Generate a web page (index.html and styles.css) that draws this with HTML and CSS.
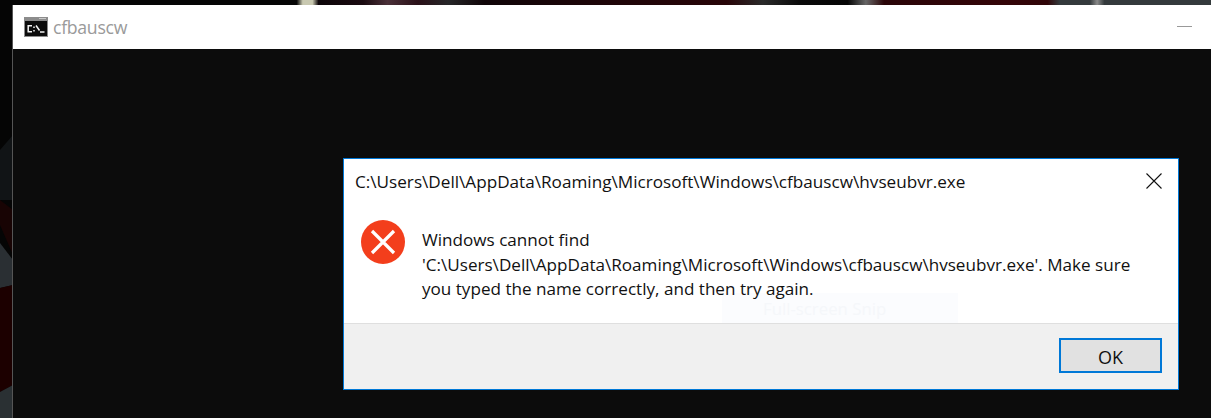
FILE: index.html
```html
<!DOCTYPE html>
<html lang="en">
<head>
<meta charset="utf-8">
<title>cfbauscw</title>
<link rel="stylesheet" href="styles.css">
</head>
<body>
<div class="desktop">
  <svg class="wallpaper" width="1211" height="418" viewBox="0 0 1211 418" aria-hidden="true">
    <defs>
      <linearGradient id="strip" x1="0" x2="1" y1="0" y2="0">
        <stop offset="0" stop-color="#050505"/>
        <stop offset=".245" stop-color="#050505"/>
        <stop offset=".25" stop-color="#c8c8b0"/>
        <stop offset=".258" stop-color="#c8c8b0"/>
        <stop offset=".263" stop-color="#0c0508"/>
        <stop offset=".30" stop-color="#1a0a10"/>
        <stop offset=".32" stop-color="#4a3038"/>
        <stop offset=".345" stop-color="#2a1018"/>
        <stop offset=".37" stop-color="#262628"/>
        <stop offset=".40" stop-color="#100508"/>
        <stop offset=".50" stop-color="#1e0508"/>
        <stop offset=".60" stop-color="#280508"/>
        <stop offset=".63" stop-color="#2a2a2a"/>
        <stop offset=".66" stop-color="#0a0a0a"/>
        <stop offset=".70" stop-color="#050505"/>
        <stop offset=".715" stop-color="#666"/>
        <stop offset=".73" stop-color="#2a0508"/>
        <stop offset=".83" stop-color="#340508"/>
        <stop offset=".865" stop-color="#300508"/>
        <stop offset=".875" stop-color="#343a3c"/>
        <stop offset=".90" stop-color="#343a3c"/>
        <stop offset=".906" stop-color="#8a8a8a"/>
        <stop offset=".912" stop-color="#343a3c"/>
        <stop offset="1" stop-color="#343a3c"/>
      </linearGradient>
    </defs>
    <rect width="1211" height="5" fill="url(#strip)"/>
    <polygon points="0,150 13,135 13,200 0,200" fill="#111416"/>
    <polygon points="0,200 13,210 13,255 0,225" fill="#180404"/>
    <polygon points="0,243 13,260 13,285 0,288" fill="#2a2f33"/>
    <polygon points="0,288 13,285 13,385 0,392" fill="#1c0000"/>
    <polygon points="0,392 13,385 13,418 0,418" fill="#2a3033"/>
  </svg>
  <main class="console">
    <header class="titlebar">
      <svg class="cmd-icon" width="24" height="20" viewBox="0 0 24 20" aria-hidden="true">
        <rect width="24" height="20" fill="#8c8c8c"/>
        <rect x="15" y="1" width="7" height="1" fill="#c8c8c8"/>
        <rect x="1" y="4" width="22" height="15" fill="#0c0c0c"/>
        <path d="M8 8.8H4.2v5.9H8M10 9.5v1.4M10 13v1.4M12 8.5l3.5 5M16 15h4.5" stroke="#f4f4f4" stroke-width="1.5" fill="none"/>
      </svg>
      <span class="app-name">cfbauscw</span>
      <span class="minimize"></span>
    </header>
  </main>
  <section class="dialog">
    <div class="ghost">Full-screen Snip</div>
    <div class="dialog-head">
      <h1 class="dialog-title">C:\Users\Dell\AppData\Roaming\Microsoft\Windows\cfbauscw\hvseubvr.exe</h1>
      <svg class="close" width="16" height="16" viewBox="0 0 16 16" aria-hidden="true">
        <path d="M.5.5l15 15M15.5.5l-15 15" stroke="#111" stroke-width="1.1" fill="none"/>
      </svg>
    </div>
    <div class="dialog-body">
      <svg class="error-icon" width="44" height="44" viewBox="0 0 44 44" aria-hidden="true">
        <circle cx="22" cy="22" r="22" fill="#f33e1c"/>
        <path d="M11 11l22 22M33 11L11 33" stroke="#fff" stroke-width="3.2" fill="none"/>
      </svg>
      <p class="message">Windows cannot find<br>'C:\Users\Dell\AppData\Roaming\Microsoft\Windows\cfbauscw\hvseubvr.exe'. Make sure<br>you typed the name correctly, and then try again.</p>
    </div>
    <footer class="dialog-foot">
      <button class="ok" type="button">OK</button>
    </footer>
  </section>
</div>
</body>
</html>
```
FILE: styles.css
```css
* { box-sizing: border-box; }
html, body { margin: 0; height: 100%; }
body { background: #050505; font-family: "Open Sans", "Noto Sans", sans-serif; overflow: hidden; }
.desktop { position: relative; width: 1211px; height: 418px; padding: 5px 0 0 12px; }
.wallpaper { position: absolute; left: 0; top: 0; }
.console { position: relative; height: 413px; background: #0c0c0c; border-left: 1px solid #555; }
.titlebar { height: 44px; background: #fff; display: flex; align-items: center; padding: 0 19px 0 11px; }
.cmd-icon { flex: none; margin-top: -1px; }
.app-name { margin-left: 5px; font-size: 17.7px; color: #9a9a9a; letter-spacing: -.3px; }
.minimize { margin-left: auto; width: 15px; height: 1px; background: #999; margin-top: -2px; }
.dialog { position: absolute; left: 343px; top: 158px; width: 836px; height: 232px; background: #fff; border: 1px solid #0078d7; display: flex; flex-direction: column; }
.dialog-head { display: flex; align-items: center; justify-content: space-between; padding: 0 16px 2px 11px; height: 46px; }
.dialog-title { margin: 0; font-size: 17.15px; font-weight: 400; color: #111; white-space: nowrap; }
.close { flex: none; margin-top: -1px; }
.dialog-body { position: relative; display: flex; gap: 17px; padding: 15px 17px 0; flex: 1; }
.error-icon { flex: none; }
.message { margin: 8px 0 0; font-size: 17.1px; line-height: 24.5px; color: #111; white-space: nowrap; }
.ghost { position: absolute; left: 378px; top: 134px; width: 236px; height: 31px; padding-left: 41px; background: #fbfcfe; color: #f5f7fa; font-size: 16.8px; line-height: 31px; }
.dialog-foot { position: relative; height: 66px; background: #f0f0f0; border-top: 1px solid #dfdfdf; display: flex; justify-content: flex-end; padding: 14px 16px 0 0; }
.ok { width: 103px; height: 35px; background: #e1e1e1; border: 2px solid #0078d7; font: inherit; font-size: 18px; color: #111; padding: 2px 0 0; }
```
